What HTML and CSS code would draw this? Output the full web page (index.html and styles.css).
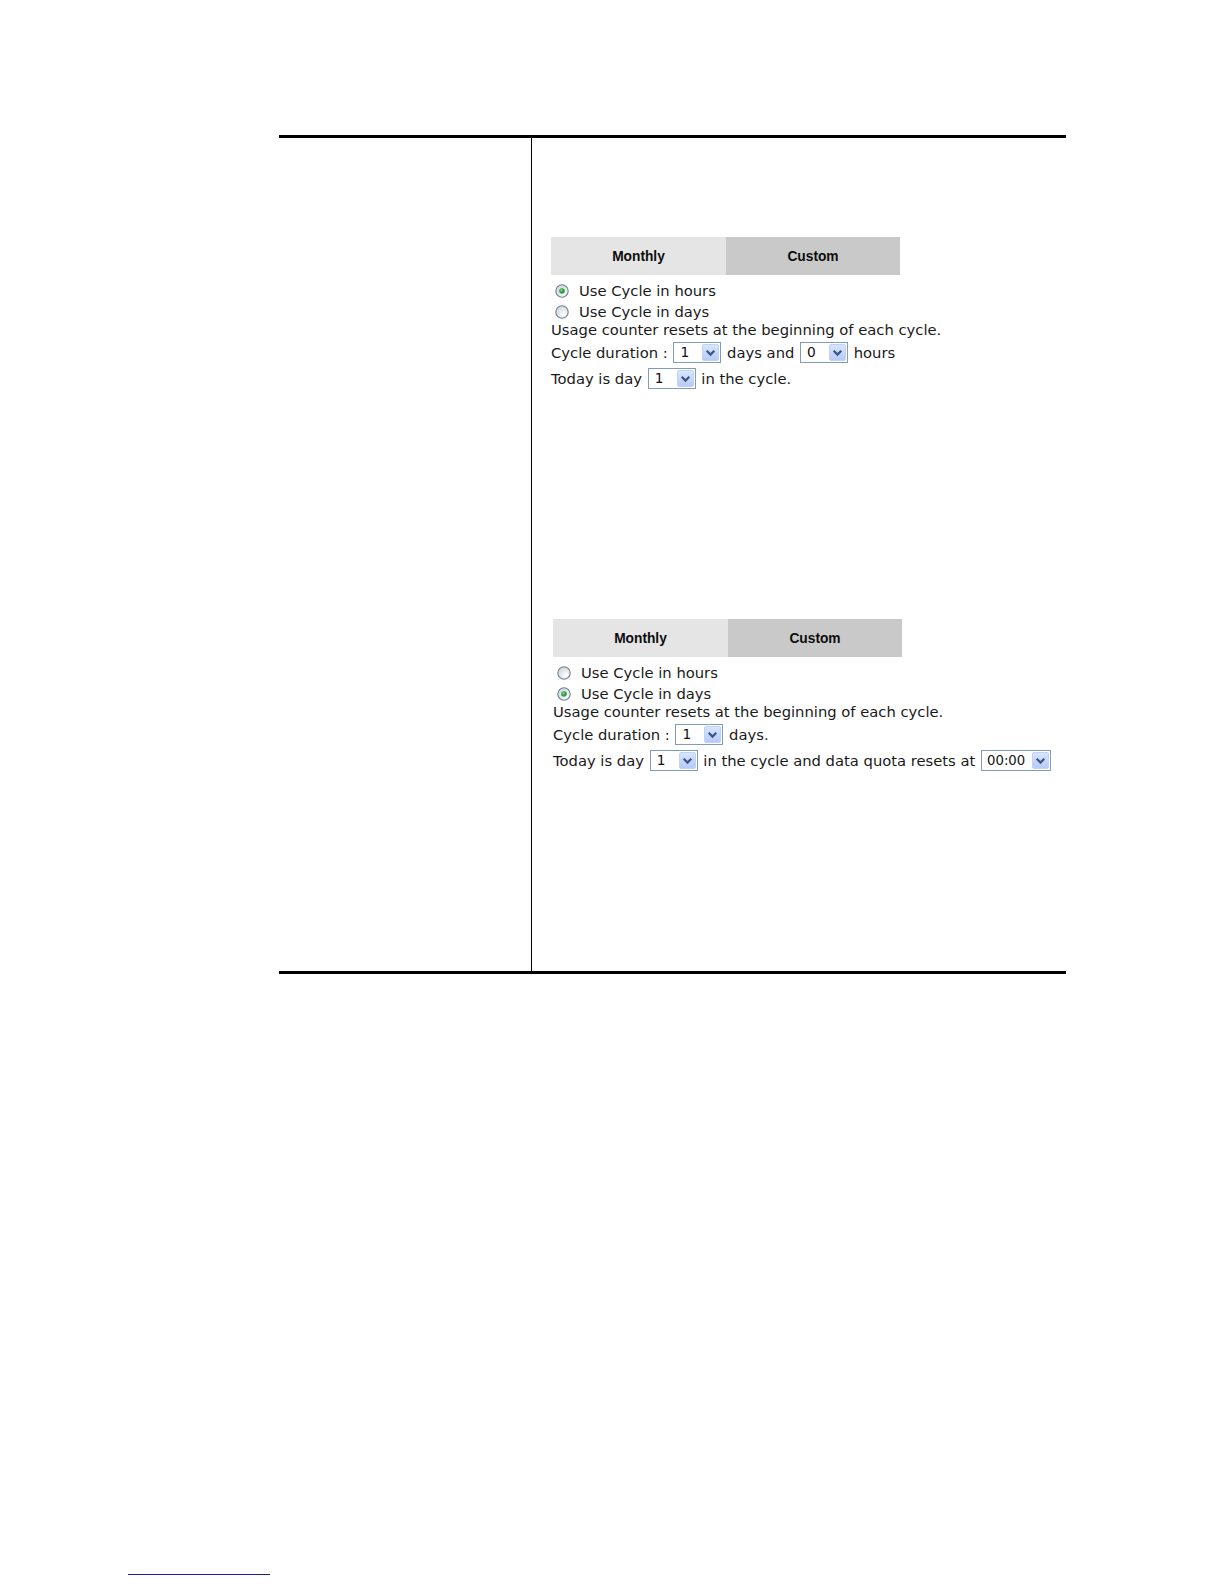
FILE: index.html
```html
<!DOCTYPE html>
<html lang="en">
<head>
<meta charset="utf-8">
<title>Cycle settings</title>
<link rel="stylesheet" href="styles.css">
</head>
<body>
<div class="page">
  <div class="table">
    <div class="col-left"></div>
    <div class="col-right">
      <div class="block block-first">
        <div class="tabs">
          <div class="tab tab-monthly">Monthly</div>
          <div class="tab tab-custom">Custom</div>
        </div>
        <div class="radio-row">
          <svg class="radio" width="14" height="14" viewBox="0 0 14 14"><defs><radialGradient id="rg1" cx="0.65" cy="0.7" r="0.7"><stop offset="0" stop-color="#ffffff"/><stop offset="1" stop-color="#d3d7dc"/></radialGradient></defs><circle cx="7" cy="7" r="6.2" fill="url(#rg1)" stroke="#6f8296" stroke-width="1.1"/><circle cx="7" cy="7" r="2.8" fill="#2f9e3f"/><circle cx="6.4" cy="6.4" r="1.1" fill="#86d992"/></svg>
          <span>Use Cycle in hours</span>
        </div>
        <div class="radio-row">
          <svg class="radio" width="14" height="14" viewBox="0 0 14 14"><defs><radialGradient id="rg2" cx="0.65" cy="0.7" r="0.7"><stop offset="0" stop-color="#ffffff"/><stop offset="1" stop-color="#d3d7dc"/></radialGradient></defs><circle cx="7" cy="7" r="6.2" fill="url(#rg2)" stroke="#6f8296" stroke-width="1.1"/></svg>
          <span>Use Cycle in days</span>
        </div>
        <div class="note">Usage counter resets at the beginning of each cycle.</div>
        <div class="field-row row-cycle">Cycle duration : <span class="select"><span class="val">1</span><span class="btn"><svg width="11" height="8" viewBox="0 0 11 8"><path d="M1.7 1.8 L5.5 5.6 L9.3 1.8" fill="none" stroke="#3a5586" stroke-width="2.2"/></svg></span></span> days and <span class="select"><span class="val">0</span><span class="btn"><svg width="11" height="8" viewBox="0 0 11 8"><path d="M1.7 1.8 L5.5 5.6 L9.3 1.8" fill="none" stroke="#3a5586" stroke-width="2.2"/></svg></span></span> hours</div>
        <div class="field-row row-today">Today is day <span class="select"><span class="val">1</span><span class="btn"><svg width="11" height="8" viewBox="0 0 11 8"><path d="M1.7 1.8 L5.5 5.6 L9.3 1.8" fill="none" stroke="#3a5586" stroke-width="2.2"/></svg></span></span> in the cycle.</div>
      </div>

      <div class="block block-second">
        <div class="tabs">
          <div class="tab tab-monthly">Monthly</div>
          <div class="tab tab-custom">Custom</div>
        </div>
        <div class="radio-row">
          <svg class="radio" width="14" height="14" viewBox="0 0 14 14"><defs><radialGradient id="rg3" cx="0.65" cy="0.7" r="0.7"><stop offset="0" stop-color="#ffffff"/><stop offset="1" stop-color="#d3d7dc"/></radialGradient></defs><circle cx="7" cy="7" r="6.2" fill="url(#rg3)" stroke="#6f8296" stroke-width="1.1"/></svg>
          <span>Use Cycle in hours</span>
        </div>
        <div class="radio-row">
          <svg class="radio" width="14" height="14" viewBox="0 0 14 14"><defs><radialGradient id="rg4" cx="0.65" cy="0.7" r="0.7"><stop offset="0" stop-color="#ffffff"/><stop offset="1" stop-color="#d3d7dc"/></radialGradient></defs><circle cx="7" cy="7" r="6.2" fill="url(#rg4)" stroke="#6f8296" stroke-width="1.1"/><circle cx="7" cy="7" r="2.8" fill="#2f9e3f"/><circle cx="6.4" cy="6.4" r="1.1" fill="#86d992"/></svg>
          <span>Use Cycle in days</span>
        </div>
        <div class="note">Usage counter resets at the beginning of each cycle.</div>
        <div class="field-row row-cycle">Cycle duration : <span class="select"><span class="val">1</span><span class="btn"><svg width="11" height="8" viewBox="0 0 11 8"><path d="M1.7 1.8 L5.5 5.6 L9.3 1.8" fill="none" stroke="#3a5586" stroke-width="2.2"/></svg></span></span> days.</div>
        <div class="field-row row-today">Today is day <span class="select"><span class="val">1</span><span class="btn"><svg width="11" height="8" viewBox="0 0 11 8"><path d="M1.7 1.8 L5.5 5.6 L9.3 1.8" fill="none" stroke="#3a5586" stroke-width="2.2"/></svg></span></span> in the cycle and data quota resets at <span class="select select-wide"><span class="val">00:00</span><span class="btn"><svg width="11" height="8" viewBox="0 0 11 8"><path d="M1.7 1.8 L5.5 5.6 L9.3 1.8" fill="none" stroke="#3a5586" stroke-width="2.2"/></svg></span></span></div>
      </div>
    </div>
  </div>
  <div class="footer-link"></div>
</div>
</body>
</html>
```

FILE: styles.css
```css
html, body {
  margin: 0;
  padding: 0;
  background: #ffffff;
}

body {
  font-family: "DejaVu Sans", Verdana, sans-serif;
  font-size: 14.75px;
  color: #1a1a1a;
}

.page {
  padding-top: 135px;
}

.table {
  margin-left: 279px;
  width: 787px;
  border-top: 3px solid #000;
  border-bottom: 3px solid #000;
  display: grid;
  grid-template-columns: 253px 534px;
  min-height: 833px;
}

.col-left {
  border-right: 1px solid #000;
}

.col-right {
  padding-top: 99px;
}

.block-first {
  padding-left: 19px;
}

.block-second {
  padding-left: 21px;
  margin-top: 230px;
}

.tabs {
  display: flex;
  height: 38px;
  margin-bottom: 5px;
}

.tab {
  display: flex;
  align-items: center;
  justify-content: center;
  font-family: "Liberation Sans", Arial, sans-serif;
  font-weight: bold;
  font-size: 13.75px;
  color: #0d0d0d;
}

.tab-monthly {
  width: 175px;
  background: #e5e5e5;
}

.tab-custom {
  width: 174px;
  background: #c9c9c9;
}

.radio-row {
  display: flex;
  align-items: center;
  height: 21px;
  padding-left: 4px;
}

.radio {
  display: block;
  margin-right: 10px;
  flex: none;
}

.note {
  line-height: 16px;
  height: 16px;
  white-space: nowrap;
}

.field-row {
  height: 20px;
  line-height: 20px;
  white-space: nowrap;
}

.row-cycle {
  margin-top: 5px;
}

.row-today {
  margin-top: 6px;
}

.select {
  display: inline-flex;
  vertical-align: top;
  box-sizing: border-box;
  width: 48px;
  height: 21px;
  margin: -1px 1px 0;
  padding: 1px;
  border: 1px solid #7f9db9;
  background: #fff;
}

.select-wide {
  width: 70px;
}

.val {
  flex: 1;
  padding-left: 5px;
  line-height: 17px;
  font-size: 13.75px;
  color: #111;
}

.select-wide .val {
  padding-left: 4px;
  font-size: 13.25px;
}

.btn {
  width: 17px;
  height: 17px;
  box-sizing: border-box;
  border: 1px solid #c0d1fb;
  border-radius: 2px;
  background: linear-gradient(#d9e5fe, #b6cbf8);
  display: flex;
  align-items: center;
  justify-content: center;
}

.btn svg {
  display: block;
}

.footer-link {
  margin-top: 600px;
  margin-left: 128px;
  width: 142px;
  height: 0;
  border-top: 1.5px solid #1c1ca3;
}
```
